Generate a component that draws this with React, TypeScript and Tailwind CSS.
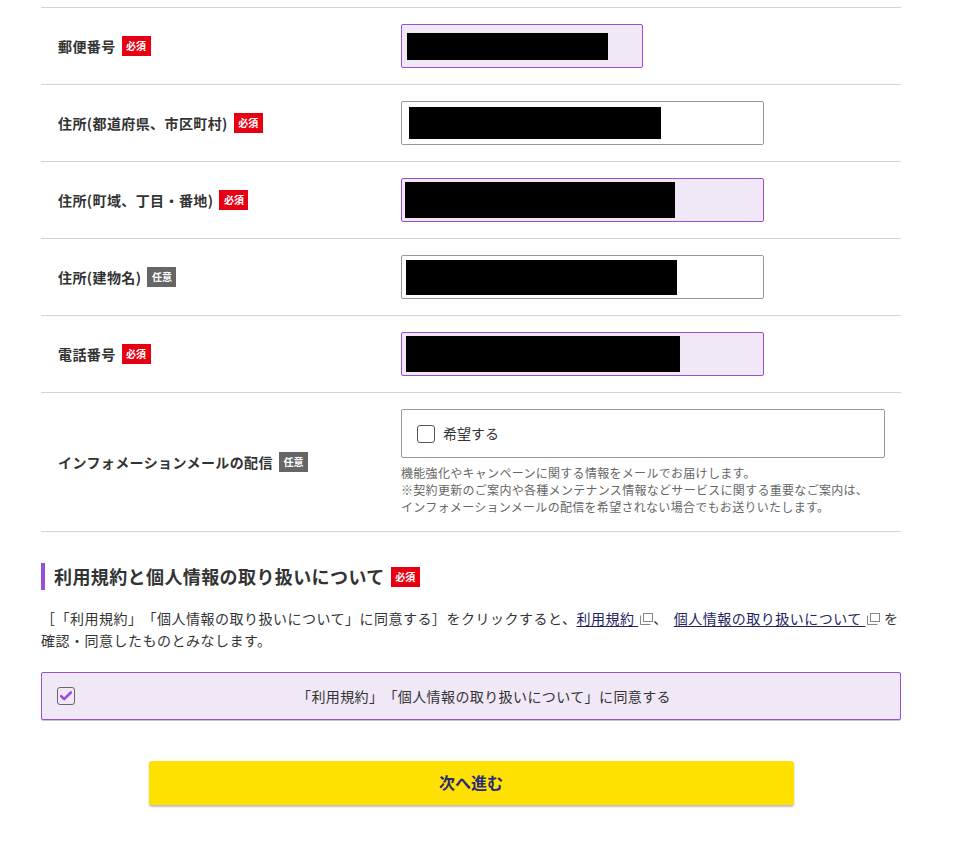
import React from "react";

const font = "font-['Meiryo','Noto_Sans_CJK_JP','Noto_Sans',sans-serif] [text-spacing-trim:space-all]";

function Badge({ required }: { required: boolean }) {
  return (
    <span
      className={`ml-[6px] inline-flex h-[20px] w-[29px] shrink-0 items-center justify-center text-[10px] font-bold leading-none tracking-normal text-white ${
        required ? "bg-[#e60012]" : "bg-[#666666]"
      }`}
    >
      {required ? "必須" : "任意"}
    </span>
  );
}

function Redacted({ filled, width, boxW, padL, barH }: { filled: boolean; width: number; boxW: string; padL: string; barH: string }) {
  return (
    <div
      className={`flex h-[44px] items-center rounded-[2px] border ${boxW} ${padL} ${
        filled ? "border-[#9b4fd6] bg-[#f0e8f7]" : "border-[#999999] bg-white"
      }`}
    >
      <div className={`bg-black ${barH}`} style={{ width }} />
    </div>
  );
}

function Row({ label, required, children }: { label: string; required: boolean; children: React.ReactNode }) {
  return (
    <div className="grid h-[77px] grid-cols-[360px_1fr] items-center border-b border-[#d4d4d4]">
      <div className="flex items-center pl-[17px] text-[14px] font-bold tracking-[0.4px] text-[#333333]">
        <span>{label}</span>
        <Badge required={required} />
      </div>
      <div>{children}</div>
    </div>
  );
}

function ExtIcon() {
  return (
    <svg width="13" height="12" viewBox="0 0 13 12" className="ml-[2px] inline-block align-[-1px]">
      <rect x="3.5" y="0.5" width="9" height="8" fill="none" stroke="#888" />
      <path d="M0.5 2.5v9h10" fill="none" stroke="#888" />
    </svg>
  );
}

export default function App() {
  return (
    <main className={`min-h-[842px] bg-white ${font}`}>
      <div className="ml-[41px] w-[860px] pt-[7px]">
        <div className="border-t border-[#d4d4d4]">
          <Row label="郵便番号" required>
            <Redacted filled width={201} boxW="w-[242px]" padL="pl-[5px]" barH="h-[27px]" />
          </Row>
          <Row label="住所(都道府県、市区町村)" required>
            <Redacted filled={false} width={252} boxW="w-[363px]" padL="pl-[7px]" barH="h-[32px]" />
          </Row>
          <Row label="住所(町域、丁目・番地)" required>
            <Redacted filled width={270} boxW="w-[363px]" padL="pl-[3px]" barH="h-[36px]" />
          </Row>
          <Row label="住所(建物名)" required={false}>
            <Redacted filled={false} width={271} boxW="w-[363px]" padL="pl-[4px]" barH="h-[35px]" />
          </Row>
          <Row label="電話番号" required>
            <Redacted filled width={274} boxW="w-[363px]" padL="pl-[4px]" barH="h-[36px]" />
          </Row>

          <div className="grid grid-cols-[360px_1fr] items-center border-b border-[#d4d4d4] pb-[16px] pt-[16px]">
            <div className="flex items-center pl-[17px] text-[14px] font-bold tracking-[0.4px] text-[#333333]">
              <span>インフォメーションメールの配信</span>
              <Badge required={false} />
            </div>
            <div>
              <label className="flex h-[49px] w-[484px] items-center rounded-[2px] border border-[#999999] bg-white pl-[15px] text-[14px] text-[#333333]">
                <span className="mr-[8px] inline-block h-[18px] w-[18px] rounded-[3px] border border-[#555555] bg-white" />
                希望する
              </label>
              <p className="mt-[6px] text-[12px] leading-[17px] tracking-[0.3px] text-[#666666]">
                機能強化やキャンペーンに関する情報をメールでお届けします。
                <br />
                ※契約更新のご案内や各種メンテナンス情報などサービスに関する重要なご案内は、
                <br />
                インフォメーションメールの配信を希望されない場合でもお送りいたします。
              </p>
            </div>
          </div>
        </div>

        <h2 className="mt-[31px] flex h-[27px] items-center border-l-[4px] border-[#9b4fd6] pl-[9px] text-[18px] font-bold tracking-[0.4px] text-[#333333]">
          利用規約と個人情報の取り扱いについて
          <Badge required />
        </h2>

        <p className="mt-[17px] text-[14px] leading-[22px] tracking-[0.5px] text-[#333333]">
          ［「利用規約」「個人情報の取り扱いについて」に同意する］をクリックすると、
          <a className="text-[#23235f] underline underline-offset-2">利用規約 </a>
          <ExtIcon />、
          <a className="ml-[6px] text-[#23235f] underline underline-offset-2">個人情報の取り扱いについて </a>
          <ExtIcon /> を確認・同意したものとみなします。
        </p>

        <label className="mt-[21px] flex h-[48px] items-center rounded-[2px] border border-[#9b4fd6] bg-[#f0e8f7] pl-[15px] pr-[15px] text-[14px] tracking-[0.4px] text-[#333333] shadow-[0_1px_0_#c8c8c8]">
          <span className="flex h-[18px] w-[18px] items-center justify-center rounded-[3px] border border-[#666666] bg-[#f0e8f7]">
            <svg width="12" height="10" viewBox="0 0 12 10">
              <path d="M1.2 5.2l3 3L10.8 1.5" fill="none" stroke="#9b4fd6" strokeWidth="2.6" strokeLinecap="round" strokeLinejoin="round" />
            </svg>
          </span>
          <span className="flex-1 pl-[8px] text-center">「利用規約」「個人情報の取り扱いについて」に同意する</span>
        </label>

        <div className="mt-[41px] flex justify-center">
          <button
            type="button"
            className="h-[44px] w-[645px] rounded-[3px] bg-[#ffe100] pb-[2px] text-[16px] font-bold text-[#2b2b7a] shadow-[0_2px_2px_rgba(0,0,0,0.25)]"
          >
            次へ進む
          </button>
        </div>
      </div>
    </main>
  );
}
